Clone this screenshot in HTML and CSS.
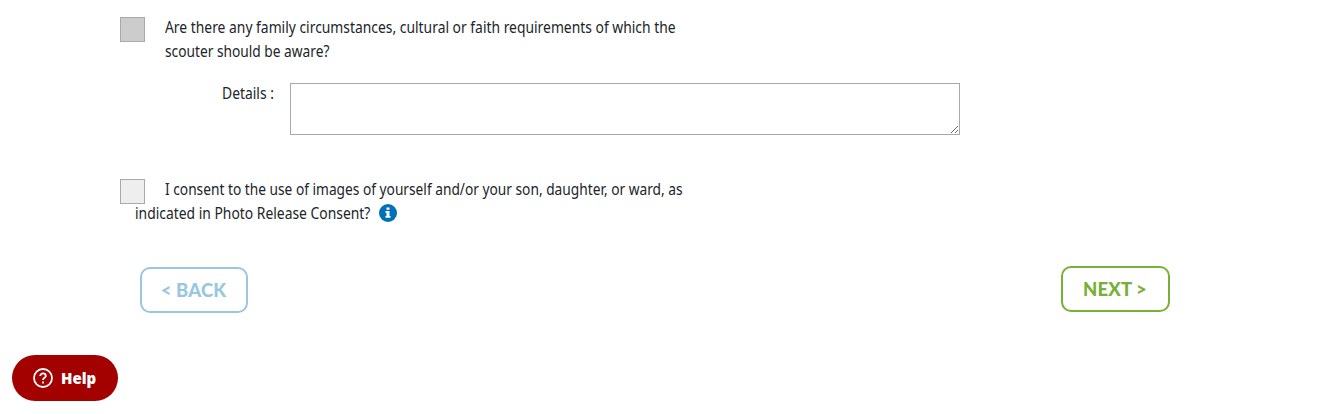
FILE: index.html
```html
<!DOCTYPE html>
<html lang="en">
<head>
<meta charset="utf-8">
<title>Consent</title>
<link rel="stylesheet" href="styles.css">
</head>
<body>
<main class="form">
  <div class="question">
    <span class="checkbox checkbox-dark"></span>
    <div class="label"><div class="line line-family">Are there any family circumstances, cultural or faith requirements of which the</div><div class="line line-aware">scouter should be aware?</div></div>
  </div>
  <div class="details">
    <label class="details-label line" for="details">Details :</label>
    <textarea id="details" class="details-input"></textarea>
  </div>
  <div class="question consent">
    <span class="checkbox"></span>
    <div class="label consent-label"><div class="line line-consent">I consent to the use of images of yourself and/or your son, daughter, or ward, as</div><div class="row"><div class="line line-photo">indicated in Photo Release Consent?</div><svg class="info" viewBox="0 0 18 18"><circle cx="9" cy="9" r="9" fill="#0071b5"/><path d="M7.5 3.5h3v2.3h-3zM6.5 7h4v5h1v1.7h-5V12h1V8.7h-1z" fill="#fff"/></svg></div></div>
  </div>
  <div class="actions">
    <button class="button back"><span class="button-text">&lt; BACK</span></button>
    <button class="button next"><span class="button-text">NEXT &gt;</span></button>
  </div>
</main>
<button class="help"><svg class="help-icon" viewBox="0 0 20 20" fill="none" stroke="#fff" stroke-width="1.8"><circle cx="10" cy="10" r="9"/><path d="M7.2 8.1C7.2 4.5 12.8 4.6 12.8 8C12.8 9.9 10 9.8 10 12.1"/><path d="M10 13.4v2"/></svg><span>Help</span></button>
</body>
</html>
```
FILE: styles.css
```css
* { box-sizing: border-box; }
body { margin: 0; height: 414px; background: #fff; color: #212529; font: 15.5px/24px "Noto Sans", sans-serif; overflow: hidden; }
.form { padding: 15px 0 0 120px; }
.question { display: flex; height: 67px; }
.checkbox { width: 25px; height: 25px; margin-top: 2px; border: 1px solid #a9a9a9; background: #eee; flex: none; }
.checkbox-dark { background: #ccc; }
.label { padding-left: 20px; }
.line { white-space: nowrap; width: max-content; transform-origin: left; transform: scaleX(.895); }
.line-aware, .line-consent { transform: scaleX(.886); }
.details { display: flex; height: 95px; }
.details-label { width: 68px; margin: -1px 0 0 102px; }
.details-input { width: 670px; height: 52px; margin: 1px 0 0; border: 1px solid #a9a9a9; background: #fff; resize: both; }
.consent { height: 89px; }
.row { display: flex; margin-left: -30px; }
.line-photo { width: 243.5px; }
.info { width: 18px; height: 18px; margin-top: 3px; }
.actions { display: flex; justify-content: space-between; width: 1050px; padding-left: 20px; }
.button { height: 46px; padding: 0; border: 2px solid; border-radius: 10px; background: #fff; font: 900 18.5px/24px Lato, sans-serif; letter-spacing: .1px; }
.back { width: 108px; margin-top: 1px; color: #99c7df; }
.next { width: 109px; color: #77b037; }
.button-text { display: block; margin-left: -1px; }
.help { position: absolute; left: 12px; top: 355px; display: flex; align-items: center; gap: 8px; width: 106px; height: 46px; padding: 0 0 0 21px; border: 0; border-radius: 23px; background: #a30000; color: #fff; font: 800 15px/20px "Open Sans", sans-serif; }
.help-icon { width: 20px; height: 20px; }
```
